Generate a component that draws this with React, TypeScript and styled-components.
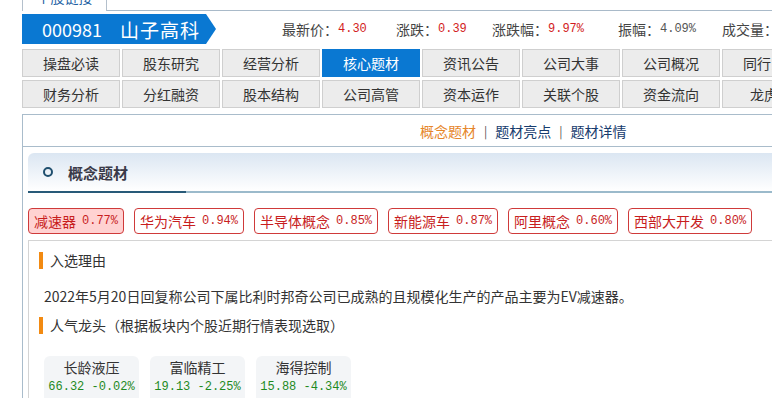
import styled, { createGlobalStyle } from 'styled-components';

const GlobalStyle = createGlobalStyle`
    body {
        margin: 0;
        background: #ffffff;
        overflow: hidden;
        font-family: "Noto Sans CJK SC", "Liberation Sans", sans-serif;
        color: #333333;
    }
`;

const mono = `"Liberation Mono", "Noto Sans CJK SC", monospace`;

const navRows = [
    ['操盘必读', '股东研究', '经营分析', '核心题材', '资讯公告', '公司大事', '公司概况', '同行比较'],
    ['财务分析', '分红融资', '股本结构', '公司高管', '资本运作', '关联个股', '资金流向', '龙虎榜'],
];

const stats = [
    { label: '最新价：', value: '4.30', red: true },
    { label: '涨跌：', value: '0.39', red: true },
    { label: '涨跌幅：', value: '9.97%', red: true },
    { label: '振幅：', value: '4.09%', red: false },
    { label: '成交量：', value: '', red: false },
];

const tags = [
    { name: '减速器', pct: '0.77%', active: true },
    { name: '华为汽车', pct: '0.94%' },
    { name: '半导体概念', pct: '0.85%' },
    { name: '新能源车', pct: '0.87%' },
    { name: '阿里概念', pct: '0.60%' },
    { name: '西部大开发', pct: '0.80%' },
];

const leaders = [
    { name: '长龄液压', price: '66.32', chg: '-0.02%' },
    { name: '富临精工', price: '19.13', chg: '-2.25%' },
    { name: '海得控制', price: '15.88', chg: '-4.34%' },
];

const App = () => {
    return (
        <Page>
            <GlobalStyle />
            <TopStrip>
                <TopTab>
                    <TopTabText>个股链接</TopTabText>
                </TopTab>
            </TopStrip>

            <HeaderRow>
                <StockBadge>
                    <span>000981</span>
                    <StockName>山子高科</StockName>
                </StockBadge>
                <Stats>
                    {stats.map((s) => (
                        <Stat key={s.label}>
                            {s.label}
                            <StatValue $red={s.red}>{s.value}</StatValue>
                        </Stat>
                    ))}
                </Stats>
            </HeaderRow>

            <NavGrid>
                {navRows.flat().map((t) => (
                    <NavTab key={t} $active={t === '核心题材'}>{t}</NavTab>
                ))}
            </NavGrid>

            <Panel>
                <SubNav>
                    <SubLink $current>概念题材</SubLink>
                    <Sep>|</Sep>
                    <SubLink>题材亮点</SubLink>
                    <Sep>|</Sep>
                    <SubLink>题材详情</SubLink>
                </SubNav>

                <PanelBody>
                    <SectionHeader>
                        <Ring />
                        <SectionTitle>概念题材</SectionTitle>
                    </SectionHeader>

                    <TagRow>
                        {tags.map((t) => (
                            <Tag key={t.name} $active={t.active}>
                                {t.name}
                                <TagPct>{t.pct}</TagPct>
                            </Tag>
                        ))}
                    </TagRow>

                    <ReasonBox>
                        <SubTitle>入选理由</SubTitle>
                        <Reason>2022年5月20日回复称公司下属比利时邦奇公司已成熟的且规模化生产的产品主要为EV减速器。</Reason>
                        <SubTitle>人气龙头（根据板块内个股近期行情表现选取）</SubTitle>
                        <CardRow>
                            {leaders.map((l) => (
                                <StockCard key={l.name}>
                                    <CardName>{l.name}</CardName>
                                    <CardValue>{l.price} {l.chg}</CardValue>
                                </StockCard>
                            ))}
                        </CardRow>
                    </ReasonBox>
                </PanelBody>
            </Panel>
        </Page>
    );
};

const Page = styled.div`
    width: 860px;
    padding-left: 22px;
`;

const TopStrip = styled.div`
    display: flex;
    height: 10px;
    border-bottom: 1px solid #a9bac9;
    margin-left: 84px;
    position: relative;
`;

const TopTab = styled.div`
    position: absolute;
    left: -84px;
    bottom: -1px;
    width: 83px;
    height: 11px;
    border-left: 1px solid #b4c0cc;
    border-right: 1px solid #b4c0cc;
    background: #ffffff;
    overflow: hidden;
`;

const TopTabText = styled.div`
    margin-top: -12px;
    font-size: 14px;
    line-height: 18px;
    color: #1d5fa3;
    text-align: center;
`;

const HeaderRow = styled.div`
    display: flex;
    align-items: center;
    margin-top: 3px;
    height: 30px;
`;

const StockBadge = styled.div`
    display: flex;
    align-items: center;
    gap: 18px;
    width: 194px;
    height: 30px;
    padding-left: 20px;
    box-sizing: border-box;
    background: #0a78d2;
    color: #ffffff;
    font-size: 18px;
    clip-path: polygon(0 0, 184px 0, 194px 50%, 184px 100%, 0 100%);
`;

const StockName = styled.span`
    font-size: 19px;
    letter-spacing: 1px;
`;

const Stats = styled.div`
    display: grid;
    grid-template-columns: 114px 96px 126px 104px auto;
    margin-left: 66px;
    font-size: 14px;
    color: #444444;
    white-space: nowrap;
`;

const Stat = styled.div`
    display: flex;
    align-items: center;
`;

const StatValue = styled.span<{ $red?: boolean }>`
    font-family: ${mono};
    font-size: 12px;
    color: ${(p) => (p.$red ? '#d21c1c' : '#555555')};
`;

const NavGrid = styled.div`
    display: grid;
    grid-template-columns: repeat(8, 98px);
    grid-auto-rows: 28px;
    column-gap: 2px;
    row-gap: 3px;
    margin-top: 5px;
`;

const NavTab = styled.div<{ $active?: boolean }>`
    display: flex;
    align-items: center;
    justify-content: center;
    box-sizing: border-box;
    border: 1px solid ${(p) => (p.$active ? '#0a78d2' : '#cfcfcf')};
    background: ${(p) => (p.$active ? '#0a78d2' : '#ececec')};
    color: ${(p) => (p.$active ? '#ffffff' : '#333333')};
    font-size: 14px;
    white-space: nowrap;
`;

const Panel = styled.div`
    margin-top: 6px;
    border-top: 1px solid #a9bccb;
    border-left: 1px solid #a9bccb;
`;

const SubNav = styled.div`
    display: flex;
    align-items: center;
    gap: 8px;
    height: 31px;
    padding-left: 397px;
    border-bottom: 1px solid #a9bccb;
    font-size: 14px;
`;

const SubLink = styled.span<{ $current?: boolean }>`
    color: ${(p) => (p.$current ? '#e6862a' : '#173c6e')};
`;

const Sep = styled.span`
    color: #555555;
    font-size: 12px;
`;

const PanelBody = styled.div`
    padding: 6px 0 0 5px;
`;

const SectionHeader = styled.div`
    display: flex;
    align-items: center;
    height: 38px;
    padding-left: 15px;
    border-top-left-radius: 6px;
    background: linear-gradient(#dbe6f2, #ffffff);
    border-bottom: 2px solid #9bbacb;
    position: relative;

    &::after {
        content: '';
        position: absolute;
        left: 0;
        bottom: -2px;
        width: 158px;
        height: 2px;
        background: #285a78;
    }
`;

const Ring = styled.span`
    width: 6px;
    height: 6px;
    border: 2px solid #1f4f6e;
    border-radius: 50%;
`;

const SectionTitle = styled.span`
    margin-left: 15px;
    font-size: 15px;
    font-weight: bold;
    color: #3a3a48;
`;

const TagRow = styled.div`
    display: flex;
    gap: 10px;
    margin-top: 15px;
`;

const Tag = styled.div<{ $active?: boolean }>`
    display: flex;
    align-items: center;
    gap: 6px;
    height: 26px;
    padding: 0 5px;
    box-sizing: border-box;
    border: 1px solid #cf3a3a;
    border-radius: 4px;
    background: ${(p) => (p.$active ? '#ffd2d2' : '#ffffff')};
    color: #c81e1e;
    font-size: 14px;
    white-space: nowrap;
`;

const TagPct = styled.span`
    font-family: ${mono};
    font-size: 12px;
`;

const ReasonBox = styled.div`
    margin-top: 6px;
    padding: 10px 0 0 10px;
    border-top: 1px solid #d4d4d4;
    border-left: 1px solid #d4d4d4;
    height: 200px;
`;

const SubTitle = styled.div`
    display: flex;
    align-items: center;
    height: 18px;
    font-size: 14px;
    color: #333333;

    &::before {
        content: '';
        width: 4px;
        height: 17px;
        margin-right: 7px;
        background: #f28a12;
    }
`;

const Reason = styled.p`
    margin: 17px 0 10px 5px;
    font-size: 14px;
    line-height: 20px;
    color: #333333;
    white-space: nowrap;
`;

const CardRow = styled.div`
    display: flex;
    gap: 11px;
    margin: 22px 0 0 5px;
`;

const StockCard = styled.div`
    display: flex;
    flex-direction: column;
    align-items: center;
    width: 95px;
    height: 50px;
    padding-top: 1px;
    border-radius: 6px;
    background: #f3f5f7;
`;

const CardName = styled.div`
    font-size: 14px;
    line-height: 20px;
    color: #333333;
`;

const CardValue = styled.div`
    margin-top: 2px;
    font-family: ${mono};
    font-size: 12px;
    line-height: 16px;
    color: #1e8a1e;
    white-space: nowrap;
`;

export default App;
